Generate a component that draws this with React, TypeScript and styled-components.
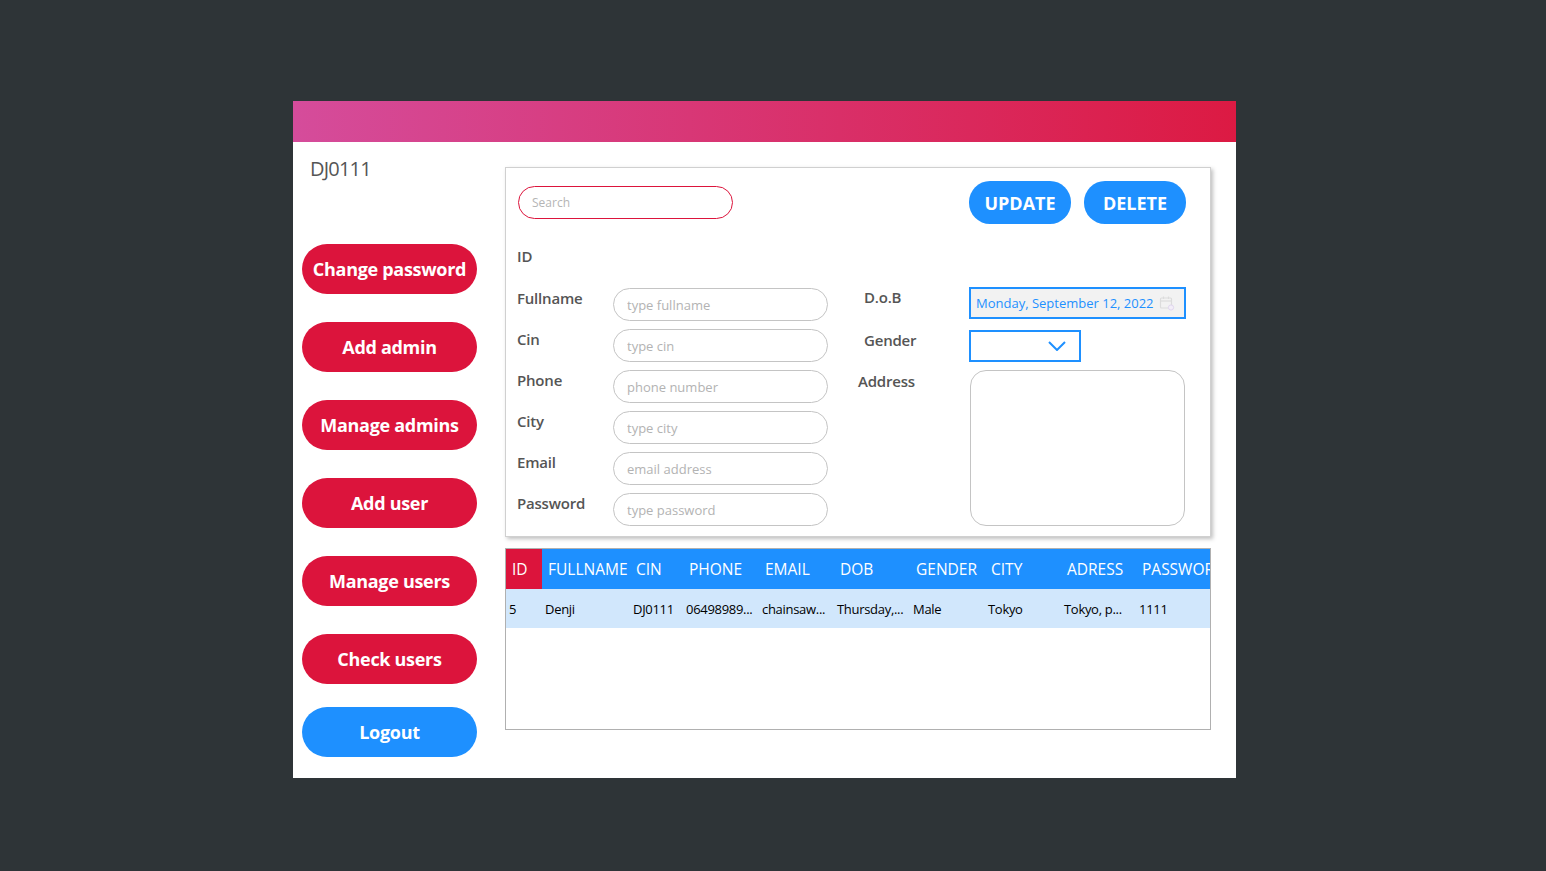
import { FC } from "react";
import styled, { createGlobalStyle } from "styled-components";

const GlobalStyle = createGlobalStyle`
  html, body {
    margin: 0;
    padding: 0;
    background: #2e3437;
    font-family: "Open Sans", "Noto Sans", sans-serif;
  }
  * { box-sizing: border-box; }
`;

const menu = ["Change password", "Add admin", "Manage admins", "Add user", "Manage users", "Check users"];

const leftFields = [
  { label: "Fullname", ph: "type fullname" },
  { label: "Cin", ph: "type cin" },
  { label: "Phone", ph: "phone number" },
  { label: "City", ph: "type city" },
  { label: "Email", ph: "email address" },
  { label: "Password", ph: "type password" },
];

// colonnes du tableau
const cols = [
  { head: "FULLNAME", w: 88 },
  { head: "CIN", w: 53 },
  { head: "PHONE", w: 76 },
  { head: "EMAIL", w: 75 },
  { head: "DOB", w: 76 },
  { head: "GENDER", w: 75 },
  { head: "CITY", w: 76 },
  { head: "ADRESS", w: 75 },
  { head: "PASSWORD", w: 100 },
];

const row = ["Denji", "DJ0111", "06498989...", "chainsaw...", "Thursday,...", "Male", "Tokyo", "Tokyo, p...", "1111"];

const gridCols = `36px ${cols.map((c) => c.w + "px").join(" ")}`;

const App: FC = () => {
  return (
    <>
      <GlobalStyle />
      <Styled.Page>
        <Styled.Window>
          <Styled.Header />
          <Styled.Body>
            <Styled.Sidebar>
              <Styled.UserCode>DJ0111</Styled.UserCode>
              <Styled.Menu>
                {menu.map((m) => (
                  <Styled.SideButton key={m}>{m}</Styled.SideButton>
                ))}
              </Styled.Menu>
              <Styled.SideButton $blue>Logout</Styled.SideButton>
            </Styled.Sidebar>

            <Styled.Main>
              <Styled.Panel>
                <Styled.TopRow>
                  <Styled.Search placeholder="Search" />
                  <Styled.Actions>
                    <Styled.ActionButton>UPDATE</Styled.ActionButton>
                    <Styled.ActionButton>DELETE</Styled.ActionButton>
                  </Styled.Actions>
                </Styled.TopRow>
                <Styled.IdLabel>ID</Styled.IdLabel>
                <Styled.Form>
                  <Styled.Column>
                    {leftFields.map((f) => (
                      <Styled.Field key={f.label}>
                        <Styled.Label>{f.label}</Styled.Label>
                        <Styled.Input placeholder={f.ph} />
                      </Styled.Field>
                    ))}
                  </Styled.Column>
                  <Styled.RightColumn>
                    <Styled.Field $gap={11}>
                      <Styled.Label $indent={6} $w={111}>D.o.B</Styled.Label>
                      <Styled.DateBox>
                        Monday, September 12, 2022
                        <Styled.CalIcon viewBox="0 0 16 16">
                          <rect x="1.5" y="3" width="11" height="10" rx="1" fill="none" stroke="#dcdcdc" strokeWidth="1.2" />
                          <line x1="1.5" y1="6" x2="12.5" y2="6" stroke="#dcdcdc" strokeWidth="1.2" />
                          <line x1="4.5" y1="1.5" x2="4.5" y2="4" stroke="#dcdcdc" strokeWidth="1.2" />
                          <line x1="9.5" y1="1.5" x2="9.5" y2="4" stroke="#dcdcdc" strokeWidth="1.2" />
                          <circle cx="12" cy="12.5" r="2.6" fill="#f3eef8" stroke="#e0d6ee" strokeWidth="1" />
                        </Styled.CalIcon>
                      </Styled.DateBox>
                    </Styled.Field>
                    <Styled.Field $gap={8}>
                      <Styled.Label $indent={6} $w={111}>Gender</Styled.Label>
                      <Styled.Select>
                        <svg width="18" height="10" viewBox="0 0 18 10">
                          <polyline points="1,1 9,9 17,1" fill="none" stroke="#1e90ff" strokeWidth="2" />
                        </svg>
                      </Styled.Select>
                    </Styled.Field>
                    <Styled.Field>
                      <Styled.Label $w={112} $top={1}>Address</Styled.Label>
                      <Styled.Textarea />
                    </Styled.Field>
                  </Styled.RightColumn>
                </Styled.Form>
              </Styled.Panel>

              <Styled.Table>
                <Styled.HeadRow $cols={gridCols}>
                  <Styled.HeadCell $red>ID</Styled.HeadCell>
                  {cols.map((c) => (
                    <Styled.HeadCell key={c.head}>{c.head}</Styled.HeadCell>
                  ))}
                </Styled.HeadRow>
                <Styled.DataRow $cols={gridCols}>
                  <Styled.Cell>5</Styled.Cell>
                  {row.map((v, i) => (
                    <Styled.Cell key={i}>{v}</Styled.Cell>
                  ))}
                </Styled.DataRow>
              </Styled.Table>
            </Styled.Main>
          </Styled.Body>
        </Styled.Window>
      </Styled.Page>
    </>
  );
};

const Styled = {
  Page: styled.div`
    min-height: 871px;
    padding: 101px 0 0 293px;
  `,
  Window: styled.div`
    width: 943px;
    height: 677px;
    background: #fff;
    display: flex;
    flex-direction: column;
  `,
  Header: styled.div`
    height: 41px;
    background: linear-gradient(to right, #d54c9b, #dc1a43);
  `,
  Body: styled.div`
    flex: 1;
    display: flex;
  `,
  Sidebar: styled.div`
    width: 212px;
    padding: 13px 0 0 9px;
    display: flex;
    flex-direction: column;
  `,
  UserCode: styled.div`
    padding-left: 8px;
    font-size: 20px;
    line-height: 28px;
    color: #555;
    height: 89px;
    letter-spacing: -0.8px;
  `,
  Menu: styled.div`
    display: flex;
    flex-direction: column;
    gap: 28px;
    margin-bottom: 23px;
  `,
  SideButton: styled.button<{ $blue?: boolean }>`
    width: 175px;
    height: 50px;
    border: none;
    border-radius: 25px;
    background: ${(p) => (p.$blue ? "#1e90ff" : "#dc143c")};
    color: #fff;
    font-family: inherit;
    font-size: 18px;
    font-weight: 700;
    letter-spacing: -0.3px;
    padding: 0;
    cursor: pointer;
  `,
  Main: styled.div`
    padding-top: 25px;
    display: flex;
    flex-direction: column;
    gap: 11px;
    width: 706px;
  `,
  Panel: styled.div`
    height: 370px;
    border: 1px solid #d0d0d0;
    box-shadow: 2px 2px 4px rgba(0, 0, 0, 0.25);
    padding: 13px 24px 0 12px;
  `,
  TopRow: styled.div`
    display: flex;
    align-items: center;
    justify-content: space-between;
    height: 43px;
  `,
  Search: styled.input`
    width: 215px;
    height: 33px;
    border: 1px solid #dc143c;
    border-radius: 17px;
    padding: 0 13px;
    font-family: inherit;
    font-size: 12px;
    outline: none;
    &::placeholder { color: #b5b5b5; }
  `,
  Actions: styled.div`
    display: flex;
    gap: 13px;
  `,
  ActionButton: styled.button`
    width: 102px;
    height: 43px;
    border: none;
    border-radius: 21px;
    background: #1e90ff;
    color: #fff;
    font-family: inherit;
    font-size: 18px;
    font-weight: 700;
  `,
  IdLabel: styled.div`
    margin-top: 22px;
    margin-left: -1px;
    font-size: 15px;
    line-height: 20px;
    color: #555;
    font-weight: 600;
  `,
  Form: styled.div`
    margin-top: 21px;
    margin-left: -1px;
    display: flex;
    gap: 30px;
  `,
  Column: styled.div`
    display: flex;
    flex-direction: column;
    gap: 8px;
    padding-top: 1px;
  `,
  RightColumn: styled.div`
    display: flex;
    flex-direction: column;
  `,
  Field: styled.div<{ $gap?: number }>`
    display: flex;
    align-items: flex-start;
    margin-bottom: ${(p) => p.$gap ?? 0}px;
  `,
  Label: styled.div<{ $indent?: number; $w?: number; $top?: number }>`
    width: ${(p) => p.$w ?? 96}px;
    padding-left: ${(p) => p.$indent ?? 0}px;
    padding-top: ${(p) => p.$top ?? 0}px;
    font-size: 15px;
    line-height: 20px;
    color: #555;
    font-weight: 600;
    letter-spacing: -0.2px;
  `,
  Input: styled.input`
    width: 215px;
    height: 33px;
    border: 1px solid #c4c4c4;
    border-radius: 17px;
    padding: 0 13px;
    font-family: inherit;
    font-size: 13px;
    outline: none;
    &::placeholder { color: #b3b3b3; }
  `,
  DateBox: styled.div`
    width: 217px;
    height: 32px;
    border: 2px solid #1e90ff;
    background: #f2f2f2;
    color: #1e90ff;
    font-size: 13px;
    display: flex;
    align-items: center;
    padding-left: 5px;
    gap: 5px;
    white-space: nowrap;
  `,
  CalIcon: styled.svg`
    width: 16px;
    height: 16px;
  `,
  Select: styled.div`
    width: 112px;
    height: 32px;
    border: 2px solid #1e90ff;
    background: #fff;
    display: flex;
    align-items: center;
    justify-content: flex-end;
    padding-right: 13px;
  `,
  Textarea: styled.div`
    width: 215px;
    height: 156px;
    border: 1px solid #c4c4c4;
    border-radius: 16px;
  `,
  Table: styled.div`
    height: 182px;
    border: 1px solid #b0b0b0;
    overflow: hidden;
    background: #fff;
  `,
  HeadRow: styled.div<{ $cols: string }>`
    display: grid;
    grid-template-columns: ${(p) => p.$cols};
    height: 40px;
    background: #1e90ff;
    white-space: nowrap;
  `,
  HeadCell: styled.div<{ $red?: boolean }>`
    background: ${(p) => (p.$red ? "#dc143c" : "transparent")};
    color: #fff;
    font-size: 15.5px;
    font-weight: 500;
    display: flex;
    align-items: center;
    padding-left: 6px;
    overflow: hidden;
  `,
  DataRow: styled.div<{ $cols: string }>`
    display: grid;
    grid-template-columns: ${(p) => p.$cols};
    height: 39px;
    background: #d1e7fc;
    white-space: nowrap;
  `,
  Cell: styled.div`
    display: flex;
    align-items: center;
    padding-left: 3px;
    font-size: 13px;
    color: #000;
    overflow: hidden;
    letter-spacing: -0.3px;
  `,
};

export default App;
